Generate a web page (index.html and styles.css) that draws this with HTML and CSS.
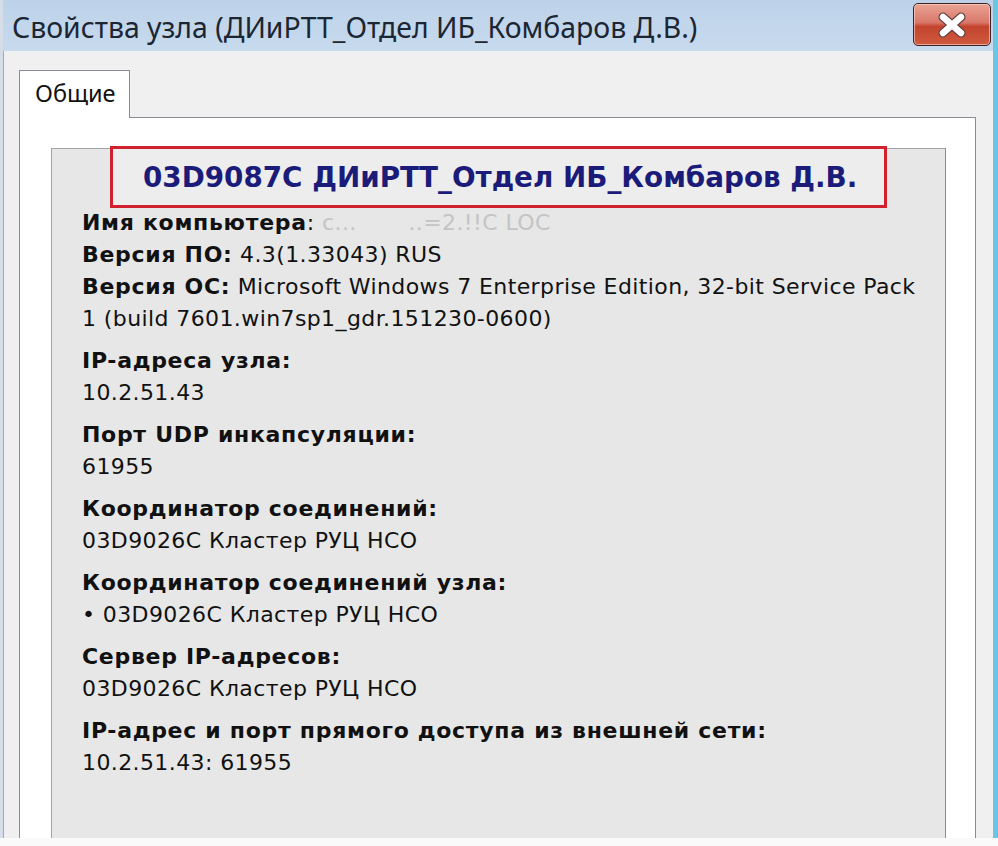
FILE: index.html
```html
<!DOCTYPE html>
<html lang="ru">
<head>
  <meta charset="UTF-8">
  <title>Свойства узла</title>
  <link rel="stylesheet" href="styles.css">
</head>
<body>
  <div class="window">
    <!-- Title bar -->
    <div class="titlebar">
      <span class="title">Свойства узла (ДИиРТТ_Отдел ИБ_Комбаров Д.В.)</span>
      <button class="close" type="button">
        <svg width="36" height="28" viewBox="0 0 36 28">
          <path d="M9 6 L27 22 M27 6 L9 22" stroke="#5a3a3a" stroke-width="9" stroke-linecap="round"/>
          <path d="M9 6 L27 22 M27 6 L9 22" stroke="#ffffff" stroke-width="6.5" stroke-linecap="round"/>
        </svg>
      </button>
    </div>

    <!-- Client area -->
    <div class="client">
      <div class="tabs">
        <div class="tab active">Общие</div>
      </div>
      <div class="tab-panel">
        <div class="group">
          <div class="node-name">03D9087C ДИиРТТ_Отдел ИБ_Комбаров Д.В.</div>
          <div class="info">
            <div class="block">
              <p><b>Имя компьютера</b>: <span class="hidden-text">c...&nbsp;&nbsp;&nbsp;&nbsp;&nbsp;&nbsp;&nbsp;..=2.!!C LOC</span></p>
              <p><b>Версия ПО:</b> 4.3(1.33043) RUS</p>
              <p><b>Версия ОС:</b> Microsoft Windows 7 Enterprise Edition, 32-bit Service Pack 1 (build 7601.win7sp1_gdr.151230-0600)</p>
            </div>
            <div class="block">
              <p><b>IP-адреса узла:</b></p>
              <p>10.2.51.43</p>
            </div>
            <div class="block">
              <p><b>Порт UDP инкапсуляции:</b></p>
              <p>61955</p>
            </div>
            <div class="block">
              <p><b>Координатор соединений:</b></p>
              <p>03D9026C Кластер РУЦ НСО</p>
            </div>
            <div class="block">
              <p><b>Координатор соединений узла:</b></p>
              <p>&bull; 03D9026C Кластер РУЦ НСО</p>
            </div>
            <div class="block">
              <p><b>Сервер IP-адресов:</b></p>
              <p>03D9026C Кластер РУЦ НСО</p>
            </div>
            <div class="block">
              <p><b>IP-адрес и порт прямого доступа из внешней сети:</b></p>
              <p>10.2.51.43: 61955</p>
            </div>
          </div>
        </div>
      </div>
    </div>
  </div>
</body>
</html>
```

FILE: styles.css
```css
/* Global */
body {
  margin: 0;
  background: #fafafa;
}

/* Window frame */
.window {
  width: 998px;
  height: 838px;
  box-sizing: border-box;
  display: flex;
  flex-direction: column;
  background: #f0f0f0;
  border-left: 3px solid #d5dee8;
  border-right: 5px solid #6cc5e3;
}

/* Title bar */
.titlebar {
  height: 51px;
  flex: none;
  display: flex;
  align-items: center;
  justify-content: space-between;
  padding: 0 2px 0 9px;
  background: linear-gradient(to bottom, #bdd2e9, #c7daee);
}

.title {
  font-family: "Noto Sans", sans-serif;
  font-size: 28.4px;
  color: #1c2633;
  white-space: nowrap;
  margin-top: 3px;
}

.close {
  width: 78px;
  height: 43px;
  margin-top: -2px;
  padding: 0;
  border: 1px solid #3e2326;
  border-radius: 5px;
  background: linear-gradient(to bottom, #e9a393 0%, #d9786a 45%, #c3442e 55%, #cf5a3e 100%);
  box-shadow: inset 0 0 0 1px rgba(255, 220, 210, 0.6);
  display: flex;
  align-items: center;
  justify-content: center;
}

/* Client area */
.client {
  flex: 1;
  display: flex;
  flex-direction: column;
  padding: 19px 17px 0 15px;
  border-left: 1px solid #a9a9a9;
}

.tabs {
  display: flex;
}

.tab {
  width: 111px;
  height: 48px;
  box-sizing: border-box;
  padding: 6px 0 0 15px;
  font-family: "Noto Sans", sans-serif;
  font-size: 23.5px;
  color: #111;
  background: #ffffff;
  border: 1px solid #898c95;
  border-bottom: none;
  position: relative;
  z-index: 1;
  margin-bottom: -1px;
}

.tab-panel {
  flex: 1;
  display: flex;
  flex-direction: column;
  padding: 30px 29px 0 31px;
  background: #ffffff;
  border: 1px solid #898c95;
  border-bottom: none;
}

/* Group box */
.group {
  flex: 1;
  padding: 0 0 0 30px;
  background: #e7e7e7;
  border: 1px solid #a3a3a3;
  border-right-color: #8c8c8c;
  border-bottom: none;
  font-family: "DejaVu Sans", sans-serif;
  color: #111;
}

.node-name {
  width: 777px;
  height: 62px;
  box-sizing: border-box;
  margin: -3px 0 0 28px;
  padding-left: 30px;
  display: flex;
  align-items: center;
  border: 3px solid #d0212e;
  background: #eeeded;
  color: #1b1b7a;
  font-size: 27.8px;
  font-weight: bold;
  white-space: nowrap;
}

.info {
  width: 845px;
  font-size: 22px;
  line-height: 32px;
  letter-spacing: 0.4px;
}

.info b {
  letter-spacing: 0.7px;
}

.block {
  margin-top: 10px;
}

.block:first-child {
  margin-top: -1px;
}

.block p {
  margin: 0;
}

.hidden-text {
  color: #c4c4c4;
}
```
